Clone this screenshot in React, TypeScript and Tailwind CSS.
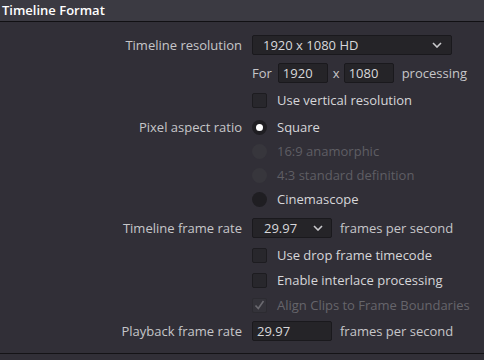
import type { ReactNode } from "react";

function Label({ children }: { children?: ReactNode }) {
  return <div className="w-[242px] shrink-0 text-right text-[#c6c6c9]">{children}</div>;
}

function Row({ label, className = "", children }: { label?: string; className?: string; children: ReactNode }) {
  return (
    <div className={`flex h-[20px] items-center ${className}`}>
      <Label>{label}</Label>
      <div className="ml-[10px] flex items-center">{children}</div>
    </div>
  );
}

function Chevron() {
  return (
    <svg width="10" height="6" viewBox="0 0 10 6" fill="none">
      <path d="M1 1l4 4 4-4" stroke="#c9c9cc" strokeWidth="1.6" />
    </svg>
  );
}

function Checkbox({ label, checked = false, disabled = false }: { label: string; checked?: boolean; disabled?: boolean }) {
  return (
    <div className="flex items-center">
      <div
        className={`flex h-[15px] w-[15px] items-center justify-center rounded-[2px] border ${
          disabled ? "border-[#2c2b31] bg-[#34333a]" : "border-[#1d1c20] bg-[#28272c]"
        }`}
      >
        {checked && (
          <svg width="11" height="10" viewBox="0 0 11 10" fill="none">
            <path d="M1.5 5.5l2.8 3L9.5 1" stroke="#6b6a70" strokeWidth="1.6" />
          </svg>
        )}
      </div>
      <span className={`ml-[10px] ${disabled ? "text-[#66656b]" : "text-[#d6d6d9]"}`}>{label}</span>
    </div>
  );
}

function Radio({ label, selected = false, disabled = false }: { label: string; selected?: boolean; disabled?: boolean }) {
  return (
    <div className="flex items-center">
      <div
        className={`flex h-[15px] w-[15px] items-center justify-center rounded-full ${
          disabled ? "bg-[#37363c]" : "bg-[#1f1e22]"
        }`}
      >
        {selected && <div className="h-[7px] w-[7px] rounded-full bg-white" />}
      </div>
      <span className={`ml-[10px] ${disabled ? "text-[#5f5e64]" : "text-[#d6d6d9]"}`}>{label}</span>
    </div>
  );
}

function Field({ value, className = "" }: { value: string; className?: string }) {
  return (
    <div
      className={`flex h-[20px] items-center rounded-[2px] border border-[#1a191d] bg-[#252428] px-[4px] text-[#d8d8db] ${className}`}
    >
      {value}
    </div>
  );
}

export default function App() {
  return (
    <div
      className="h-[360px] w-[484px] overflow-hidden bg-[#312f37] text-[13px] leading-none"
      style={{ fontFamily: '"Open Sans", "Noto Sans", sans-serif' }}
    >
      <div className="flex h-[22px] items-center border-b border-[#111013] bg-[#3b3a42] pl-[2px] font-semibold text-white">
        Timeline Format
      </div>

      <div className="border-b border-[#141316] pb-[12px]">
        <Row label="Timeline resolution" className="mt-[13px]">
          <div className="flex h-[20px] w-[200px] items-center justify-between rounded-[2px] border border-[#1a191d] bg-[#252428] pl-[10px] pr-[9px] text-[#d8d8db]">
            <span>1920 x 1080 HD</span>
            <Chevron />
          </div>
        </Row>

        <Row className="mt-[8px]">
          <span className="text-[#c6c6c9]">For</span>
          <Field value="1920" className="ml-[6px] w-[50px]" />
          <span className="ml-[5px] text-[#c6c6c9]">x</span>
          <Field value="1080" className="ml-[4px] w-[50px]" />
          <span className="ml-[8px] text-[#c6c6c9]">processing</span>
        </Row>

        <Row className="mt-[7px]">
          <Checkbox label="Use vertical resolution" />
        </Row>

        <Row label="Pixel aspect ratio" className="mt-[7px]">
          <Radio label="Square" selected />
        </Row>
        <Row className="mt-[4px]">
          <Radio label="16:9 anamorphic" disabled />
        </Row>
        <Row className="mt-[4px]">
          <Radio label="4:3 standard definition" disabled />
        </Row>
        <Row className="mt-[4px]">
          <Radio label="Cinemascope" />
        </Row>

        <Row label="Timeline frame rate" className="mt-[9px]">
          <div className="flex h-[20px] w-[80px] items-center justify-between rounded-[2px] border border-[#1a191d] bg-[#252428] pl-[11px] pr-[8px] text-[#d8d8db]">
            <span>29.97</span>
            <Chevron />
          </div>
          <span className="ml-[8px] text-[#c6c6c9]">frames per second</span>
        </Row>

        <Row className="mt-[7px]">
          <Checkbox label="Use drop frame timecode" />
        </Row>
        <Row className="mt-[5px]">
          <Checkbox label="Enable interlace processing" />
        </Row>
        <Row className="mt-[5px]">
          <Checkbox label="Align Clips to Frame Boundaries" checked disabled />
        </Row>

        <Row label="Playback frame rate" className="mt-[6px]">
          <Field value="29.97" className="w-[80px]" />
          <span className="ml-[8px] text-[#c6c6c9]">frames per second</span>
        </Row>
      </div>
    </div>
  );
}
